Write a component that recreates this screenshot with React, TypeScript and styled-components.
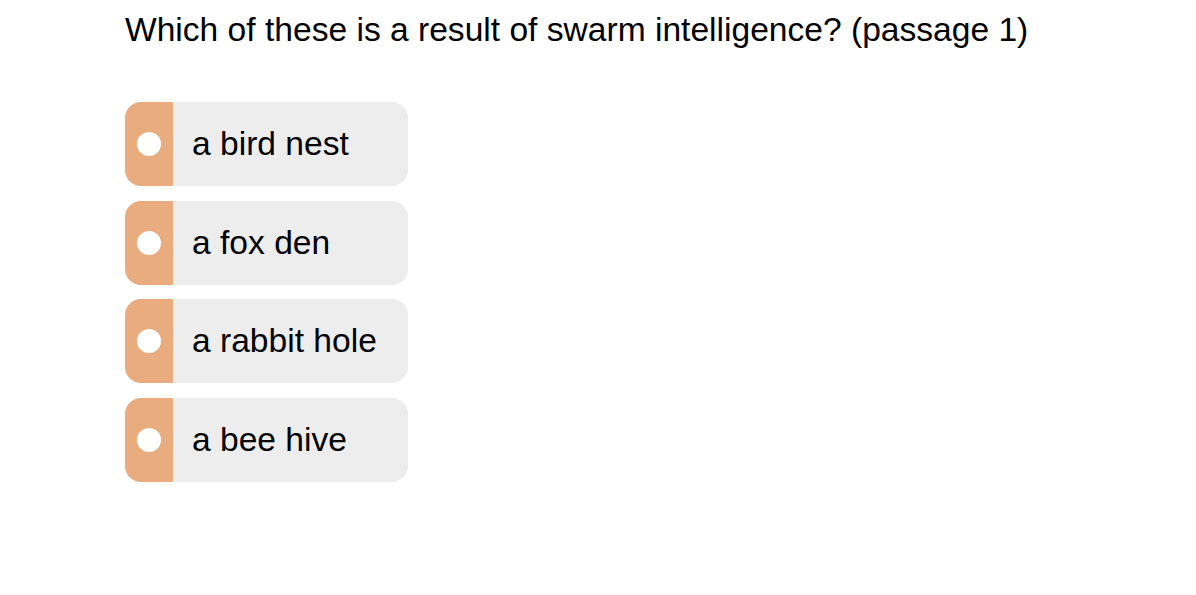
import React from "react";
import styled, { createGlobalStyle } from "styled-components";

const Global = createGlobalStyle`
  html, body { margin: 0; padding: 0; background: #ffffff; }
  body { font-family: "Liberation Sans", Arial, sans-serif; }
`;

const Page = styled.div`
  padding: 8px 0 0 125px;
`;

const Question = styled.h1`
  margin: 0;
  font-weight: 400;
  font-size: 33.6px;
  line-height: 44px;
  color: #000;
`;

const Options = styled.div`
  margin-top: 50px;
  display: flex;
  flex-direction: column;
  gap: 14.7px;
`;

const Option = styled.div`
  display: flex;
  width: 283px;
  height: 84px;
  border-radius: 16px;
  overflow: hidden;
  background: #ededed;
`;

const Tab = styled.div`
  width: 48px;
  flex: none;
  background: #e8ac7e;
  display: flex;
  align-items: center;
  justify-content: center;
`;

const Dot = styled.span`
  width: 24px;
  height: 24px;
  border-radius: 50%;
  background: #ffffff;
`;

const Label = styled.span`
  display: flex;
  align-items: center;
  padding-left: 19px;
  font-size: 33.6px;
  color: #000;
`;

const options = ["a bird nest", "a fox den", "a rabbit hole", "a bee hive"];

export default function App() {
  return (
    <Page>
      <Global />
      <Question>Which of these is a result of swarm intelligence? (passage 1)</Question>
      <Options>
        {options.map((o) => (
          <Option key={o}>
            <Tab>
              <Dot />
            </Tab>
            <Label>{o}</Label>
          </Option>
        ))}
      </Options>
    </Page>
  );
}
